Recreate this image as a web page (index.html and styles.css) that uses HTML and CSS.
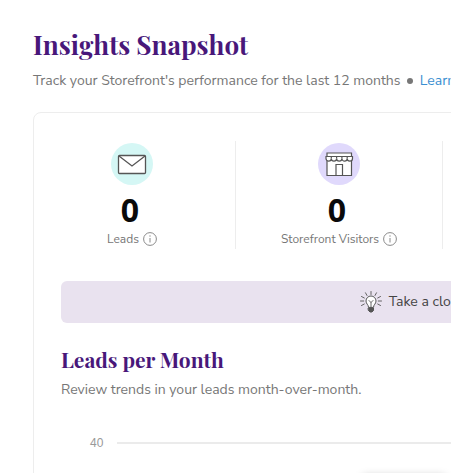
FILE: index.html
```
<!DOCTYPE html>
<html lang="en">
<head>
    <meta charset="UTF-8">
    <meta name="viewport" content="width=device-width, initial-scale=1.0">
    <title>Insights Snapshot</title>
    <link rel="stylesheet" href="styles.css">
</head>
<body>
    <main class="insights">
        <h1>Insights Snapshot</h1>
        <p class="subtitle">Track your Storefront's performance for the last 12 months <span class="dot"></span> <a href="#">Learn more</a></p>

        <section class="card">
            <div class="stats">
                <div class="stat">
                    <svg class="stat-icon" viewBox="0 0 42 42" fill="none" stroke="#555" stroke-width="1.3">
                        <circle cx="21" cy="21" r="21" fill="#d5f7f5" stroke="none"/>
                        <rect x="7.5" y="12.5" width="27" height="18" rx="1" fill="#fff"/>
                        <path d="M8 13l13 10 13-10"/>
                    </svg>
                    <strong class="stat-value">0</strong>
                    <div class="stat-label">Leads
                        <svg class="info" viewBox="0 0 14 14" fill="none" stroke="#8a8a8a">
                            <circle cx="7" cy="7" r="6.4"/>
                            <path d="M7 6v4.5M7 3.3v1.4"/>
                        </svg>
                    </div>
                </div>
                <div class="stat">
                    <svg class="stat-icon" viewBox="0 0 42 42" fill="none" stroke="#555" stroke-width="1.2">
                        <circle cx="21" cy="21" r="21" fill="#e0d9fc" stroke="none"/>
                        <path d="M9 10h24.500v22.500H9z" fill="#fff"/>
                        <path d="M8 13.500h26.500v2a2.650 2.650 0 0 1-5.300 0 2.650 2.650 0 0 1-5.300 0 2.650 2.650 0 0 1-5.300 0 2.650 2.650 0 0 1-5.300 0 2.650 2.650 0 0 1-5.300 0z" fill="#fff"/>
                        <path d="M13.300 13.500v2M18.600 13.500v2M23.900 13.500v2M29.200 13.500v2M18 32.500v-11h6.500v11"/>
                    </svg>
                    <strong class="stat-value">0</strong>
                    <div class="stat-label">Storefront Visitors
                        <svg class="info" viewBox="0 0 14 14" fill="none" stroke="#8a8a8a">
                            <circle cx="7" cy="7" r="6.4"/>
                            <path d="M7 6v4.5M7 3.3v1.4"/>
                        </svg>
                    </div>
                </div>
            </div>

            <div class="banner">
                <svg class="bulb" viewBox="0 0 22 22" fill="none" stroke="#555" stroke-linecap="round">
                    <path d="M11 .5v3M5.500 1.800l1.500 2.700M16.500 1.800L15 4.500M1.500 5.500l2.800 1.500M20.500 5.500L17.700 7M.5 10h3.200M18.300 10h3.200M1.500 14.500l2.800-1.500M20.500 14.500L17.700 13" stroke-width=".9"/>
                    <path d="M8.500 16c0-2.500-2.500-3-2.500-6a5 5 0 0 1 10 0c0 3-2.500 3.500-2.500 6z" fill="#fff"/>
                    <path d="M11 16v-4.500L9 9.500M11 11.500l2-2" stroke-width=".9"/>
                    <path d="M8.500 17h5v2.500l-1.500 1.500h-2l-1.500-1.500z" fill="#555"/>
                </svg>
                Take a closer look
            </div>

            <h2>Leads per Month</h2>
            <p class="hint">Review trends in your leads month-over-month.</p>

            <div class="chart">
                <div class="grid-row">
                    <span class="tick">40</span>
                    <span class="grid-line"></span>
                </div>
                <div class="tooltip"></div>
            </div>
        </section>
    </main>
</body>
</html>
```
FILE: styles.css
```
body {
    margin: 0;
    overflow: hidden;
    background-color: #fff;
    color: #777;
    font-family: "Nunito Sans", "Nunito", "Noto Sans", sans-serif;
    font-size: 14px;
    line-height: 20px;
}

.insights {
    min-width: 794px;
    padding: 28px 33px;
}

h1, h2 {
    margin: 0;
    color: #48177a;
    font-family: "Playfair Display", "Liberation Serif", serif;
    font-weight: bold;
}

h1 {
    font-size: 26px;
    line-height: 34px;
}

h2 {
    font-size: 21px;
    line-height: 28px;
}

p {
    margin: 0;
}

.subtitle {
    padding: 9px 0 21px;
}

.dot {
    display: inline-block;
    width: 6px;
    height: 6px;
    margin: 0 3px 1px;
    border-radius: 50%;
    background-color: #777;
}

a {
    color: #3b8fd1;
    text-decoration: none;
}

.card {
    padding: 28px 27px;
    border: 1px solid #ededed;
    border-radius: 8px;
}

.stats {
    display: flex;
    margin: 0 -32px 32px;
}

.stat {
    box-sizing: border-box;
    display: flex;
    flex: 0 0 207px;
    flex-direction: column;
    align-items: center;
    height: 108px;
    border-right: 1px solid #ededed;
}

.stat-icon {
    flex: none;
    width: 42px;
    height: 42px;
    margin-top: 2px;
}

.stat-value {
    margin: 6px 4px 0 0;
    color: #0a0a0a;
    font-family: "Open Sans", sans-serif;
    font-size: 32px;
    line-height: 38px;
}

.stat-label {
    display: flex;
    align-items: center;
    gap: 4px;
    font-size: 12px;
}

.info {
    width: 14px;
    height: 14px;
}

.banner {
    display: flex;
    justify-content: center;
    align-items: center;
    gap: 7px;
    height: 42px;
    margin-bottom: 22px;
    border-radius: 6px;
    background-color: #e9e2ef;
    color: #444;
}

.bulb {
    width: 22px;
    height: 22px;
}

.hint {
    padding-top: 7px;
}

.chart {
    position: relative;
    height: 240px;
    padding: 33px 0 0 29px;
}

.grid-row {
    display: flex;
    align-items: center;
    gap: 14px;
}

.tick {
    color: #999;
    font-family: "Liberation Sans", sans-serif;
    font-size: 12px;
}

.grid-line {
    flex: 1;
    height: 2px;
    background-color: #ebebeb;
}

/* hover card of the chart */
.tooltip {
    position: absolute;
    top: 76px;
    left: 300px;
    width: 86px;
    height: 60px;
    border-radius: 6px;
    background-color: #fff;
    box-shadow: 0 0 8px rgba(0, 0, 0, 0.25);
}
```
